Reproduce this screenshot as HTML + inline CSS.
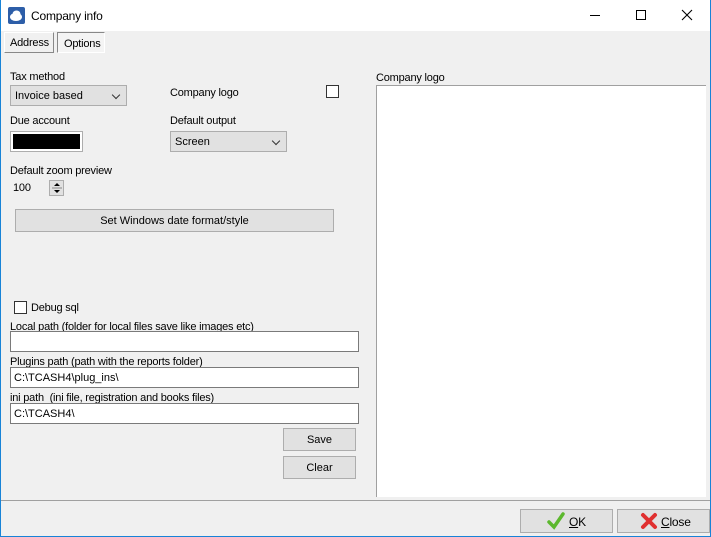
<!DOCTYPE html>
<html><head><style>
*{box-sizing:border-box;margin:0;padding:0}
body{width:711px;height:537px;overflow:hidden;background:#f0f0f0;font-family:"Liberation Sans",sans-serif;font-size:11px;color:#000;position:relative}
.a{position:absolute}
.win{position:absolute;left:0;top:0;width:711px;height:537px;border:1px solid #1883d7;border-top:none}
.title{left:0;top:0;width:711px;height:31px;background:#fff}
.lbl{position:absolute;white-space:nowrap;font-size:11px;letter-spacing:-0.2px}
.combo{position:absolute;background:#e1e1e1;border:1px solid #adadad;padding:4px 4px;font-size:11px}
.combo:after{content:"";position:absolute;right:7px;top:6px;width:5px;height:5px;border-right:1px solid #333;border-bottom:1px solid #333;transform:rotate(45deg)}
.btn{position:absolute;background:#e1e1e1;border:1px solid #adadad;text-align:center;font-size:11px}
.edit{position:absolute;background:#fff;border:1px solid #7a7a7a;padding:4px 3px;font-size:11px}
.chk{position:absolute;width:13px;height:13px;border:1px solid #333;background:#fff}
</style></head><body>
<div class="a title"></div>
<svg class="a" style="left:8px;top:7px" width="17" height="17"><rect x="0" y="0" width="17" height="17" rx="2" fill="#2d5ea8"/><ellipse cx="8" cy="10" rx="6" ry="4" fill="#fff"/><ellipse cx="8.5" cy="7" rx="4" ry="3.5" fill="#fff"/></svg>
<div class="lbl" style="left:31px;top:9px;font-size:12px">Company info</div>
<div class="a" style="left:590px;top:15px;width:10px;height:1px;background:#000"></div>
<div class="a" style="left:636px;top:10px;width:10px;height:10px;border:1px solid #000"></div>
<svg class="a" style="left:681px;top:9px" width="12" height="12"><path d="M1 1L11 11M11 1L1 11" stroke="#000" stroke-width="1.1"/></svg>
<div class="a" style="left:4px;top:32px;width:50px;height:21px;background:#f0f0f0;border:1px solid #fff;border-right-color:#888;border-bottom-color:#888"></div>
<div class="lbl" style="left:10px;top:37px">Address</div>
<div class="a" style="left:57px;top:32px;width:48px;height:21px;background:#f4f4f4;border:1px solid #fff;border-left-color:#888;border-top-color:#888"></div>
<div class="lbl" style="left:64px;top:38px">Options</div>
<div class="lbl" style="left:10px;top:71px">Tax method</div>
<div class="combo" style="left:10px;top:85px;width:117px;height:21px">Invoice based</div>
<div class="lbl" style="left:170px;top:87px">Company logo</div>
<div class="chk" style="left:326px;top:85px"></div>
<div class="lbl" style="left:10px;top:115px">Due account</div>
<div class="a" style="left:10px;top:131px;width:73px;height:21px;border:1px solid #adadad;background:#fff;padding:2px"><div style="width:100%;height:100%;background:#000"></div></div>
<div class="lbl" style="left:170px;top:115px">Default output</div>
<div class="combo" style="left:170px;top:131px;width:117px;height:21px">Screen</div>
<div class="lbl" style="left:10px;top:165px">Default zoom preview</div>
<div class="lbl" style="left:13px;top:182px">100</div>
<div class="a" style="left:49px;top:180px;width:15px;height:16px;background:#e1e1e1;border:1px solid #adadad"></div>
<svg class="a" style="left:51px;top:181px" width="12" height="14"><path d="M3 5L6 2L9 5Z M3 9L6 12L9 9Z" fill="#000"/><path d="M1 7H11" stroke="#888"/></svg>
<div class="btn" style="left:15px;top:209px;width:319px;height:23px;line-height:23px">Set Windows date format/style</div>
<div class="chk" style="left:14px;top:301px"></div>
<div class="lbl" style="left:31px;top:302px">Debug sql</div>
<div class="lbl" style="left:10px;top:321px">Local path (folder for local files save like images etc)</div>
<div class="edit" style="left:10px;top:331px;width:349px;height:21px"></div>
<div class="lbl" style="left:10px;top:356px">Plugins path (path with the reports folder)</div>
<div class="edit" style="left:10px;top:367px;width:349px;height:21px">C:\TCASH4\plug_ins\</div>
<div class="lbl" style="left:10px;top:392px">ini path&nbsp; (ini file, registration and books files)</div>
<div class="edit" style="left:10px;top:403px;width:349px;height:21px">C:\TCASH4\</div>
<div class="btn" style="left:283px;top:428px;width:73px;height:23px;line-height:23px">Save</div>
<div class="btn" style="left:283px;top:456px;width:73px;height:23px;line-height:23px">Clear</div>
<div class="lbl" style="left:376px;top:72px">Company logo</div>
<div class="a" style="left:376px;top:85px;width:330px;height:412px;background:#fff;border-top:1px solid #a0a0a0;border-left:1px solid #a0a0a0"></div>
<div class="a" style="left:1px;top:500px;width:709px;height:1px;background:#a0a0a0"></div>
<div class="btn" style="left:520px;top:509px;width:93px;height:24px"></div>
<svg class="a" style="left:547px;top:512px" width="18" height="18"><path d="M2 10L7 15L16 2" stroke="#5cb82e" stroke-width="3.5" fill="none" stroke-linecap="round"/></svg>
<div class="lbl" style="left:569px;top:515px;font-size:12px"><u>O</u>K</div>
<div class="btn" style="left:617px;top:509px;width:93px;height:24px"></div>
<svg class="a" style="left:640px;top:512px" width="18" height="18"><path d="M3 3L15 15M15 3L3 15" stroke="#e03030" stroke-width="4" stroke-linecap="round"/></svg>
<div class="lbl" style="left:661px;top:515px;font-size:12px"><u>C</u>lose</div>
<div class="win"></div>
</body></html>
